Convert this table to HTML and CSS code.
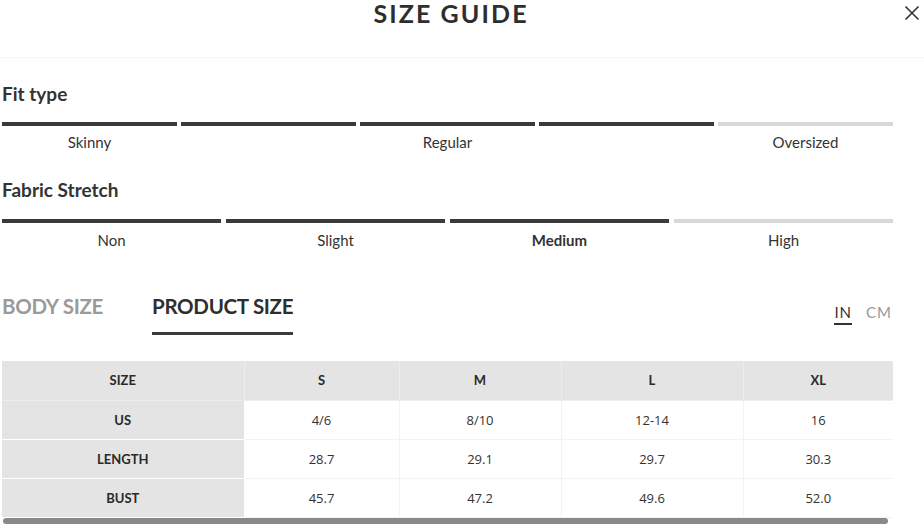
FILE: index.html
```html
<!DOCTYPE html>
<html>
<head>
<meta charset="utf-8">
<link rel="stylesheet" href="styles.css">
</head>
<body>
<div class="modal">
  <header class="head">
    <h1 class="title">SIZE GUIDE</h1>
    <button class="close" aria-label="Close">
      <svg width="16" height="16" viewBox="0 0 16 16"><path d="M1.5 1.5L14.5 14.5M14.5 1.5L1.5 14.5" stroke="#333" stroke-width="1.6" fill="none"/></svg>
    </button>
  </header>
  <div class="content">
    <section class="scale">
      <h2 class="scale-title">Fit type</h2>
      <div class="bars five">
        <span class="bar on"></span><span class="bar on"></span><span class="bar on"></span><span class="bar on"></span><span class="bar"></span>
      </div>
      <div class="labels five">
        <span>Skinny</span><span></span><span>Regular</span><span></span><span>Oversized</span>
      </div>
    </section>
    <section class="scale">
      <h2 class="scale-title">Fabric Stretch</h2>
      <div class="bars four">
        <span class="bar on"></span><span class="bar on"></span><span class="bar on"></span><span class="bar"></span>
      </div>
      <div class="labels four">
        <span>Non</span><span>Slight</span><span class="strong">Medium</span><span>High</span>
      </div>
    </section>
    <div class="tabs-row">
      <div class="tabs">
        <span class="tab">BODY SIZE</span>
        <span class="tab active">PRODUCT SIZE</span>
      </div>
      <div class="units">
        <span class="unit active">IN</span>
        <span class="unit">CM</span>
      </div>
    </div>
    <table class="chart">
      <colgroup>
        <col class="c0"><col class="c1"><col class="c2"><col class="c3"><col class="c4">
      </colgroup>
      <thead>
        <tr><th>SIZE</th><th>S</th><th>M</th><th>L</th><th>XL</th></tr>
      </thead>
      <tbody>
        <tr><th>US</th><td>4/6</td><td>8/10</td><td>12-14</td><td>16</td></tr>
        <tr><th>LENGTH</th><td>28.7</td><td>29.1</td><td>29.7</td><td>30.3</td></tr>
        <tr><th>BUST</th><td>45.7</td><td>47.2</td><td>49.6</td><td>52.0</td></tr>
      </tbody>
    </table>
    <div class="scrollbar"><div class="thumb"></div></div>
  </div>
</div>
</body>
</html>
```
FILE: styles.css
```css
* { box-sizing: border-box; }
html, body { margin: 0; padding: 0; background: #fff; }
body {
  font-family: Lato, "Open Sans", sans-serif;
  color: #333;
  width: 924px;
  height: 527px;
  overflow: hidden;
}
.modal { position: relative; }
.head {
  height: 58px;
  border-bottom: 1px solid #f6f6f4;
  display: flex;
  justify-content: center;
  padding-right: 24px;
}
.title {
  margin: 0;
  font-family: Lato, sans-serif;
  font-weight: 700;
  font-size: 25px;
  line-height: 26px;
  letter-spacing: 2.1px;
  color: #2e2e2e;
  padding-left: 2px;
}
.close {
  position: absolute;
  right: 2px;
  top: 4px;
  width: 20px;
  height: 20px;
  padding: 0;
  border: 0;
  background: none;
}
.content {
  padding: 0 31px 0 2px;
}
.scale-title {
  margin: 0;
  font-family: Lato, sans-serif;
  font-size: 19px;
  font-weight: 700;
  color: #333;
  line-height: 24px;
}
.scale:first-child .scale-title { margin-top: 24px; }
.scale + .scale .scale-title { margin-top: 26px; }
.bars { display: flex; margin-top: 16px; }
.bars.five { gap: 4px; }
.bars.four { gap: 5px; margin-top: 17px; }
.bar {
  flex: 1;
  height: 4px;
  background: #d8d8d8;
}
.bar.on { background: #3a3a3a; }
.labels {
  display: grid;
  margin-top: 7px;
  font-family: Lato, sans-serif;
  font-size: 15px;
  line-height: 19px;
  color: #333;
}
.labels.four { margin-top: 8px; }
.labels.five { grid-template-columns: repeat(5, 1fr); column-gap: 4px; }
.labels.four { grid-template-columns: repeat(4, 1fr); column-gap: 5px; }
.labels span { text-align: center; }
.labels .strong { font-weight: 700; }
.tabs-row {
  display: flex;
  justify-content: space-between;
  align-items: flex-start;
  margin-top: 44px;
}
.tabs { display: flex; gap: 49px; }
.tab {
  font-family: Lato, sans-serif;
  font-weight: 700;
  font-size: 20.5px;
  line-height: 24px;
  color: #9a9a9a;
  letter-spacing: -0.3px;
  padding-bottom: 14px;
  border-bottom: 3px solid transparent;
}
.tab.active { color: #2e2e2e; border-bottom-color: #3a3a3a; }
.units { display: flex; gap: 14px; margin-top: 9px; margin-right: 1px; }
.unit {
  font-family: Lato, sans-serif;
  font-size: 15px;
  line-height: 18px;
  letter-spacing: 1px;
  color: #999;
  padding-bottom: 2px;
  border-bottom: 2px solid transparent;
}
.unit.active { color: #333; border-bottom-color: #333; }
.chart {
  margin-top: 26px;
  width: 891px;
  border-collapse: collapse;
  table-layout: fixed;
  font-size: 13px;
}
.c0 { width: 242px; }
.c1 { width: 155px; }
.c2 { width: 162px; }
.c3 { width: 182px; }
.c4 { width: 150px; }
.chart th, .chart td {
  height: 39px;
  text-align: center;
  padding: 0;
  border: 1px solid #f3f3f1;
}
.chart thead th { background: #e4e4e4; border-color: #ededed; height: 39px; }
.chart tr > *:first-child { border-left: 0; }
.chart tr > *:last-child { border-right: 0; }
.chart thead tr > * { border-top: 0; }
.chart th {
  font-family: Lato, sans-serif;
  font-weight: 700;
  color: #2a2a2a;
}
.chart tbody th { background: #e4e4e4; border-color: #fff; }
.chart td {
  font-family: "Open Sans", sans-serif;
  color: #333;
}
.scrollbar { height: 6px; width: 891px; }
.thumb { margin-left: 1px; width: 885px; height: 6px; border-radius: 3px; background: #898989; }
```
